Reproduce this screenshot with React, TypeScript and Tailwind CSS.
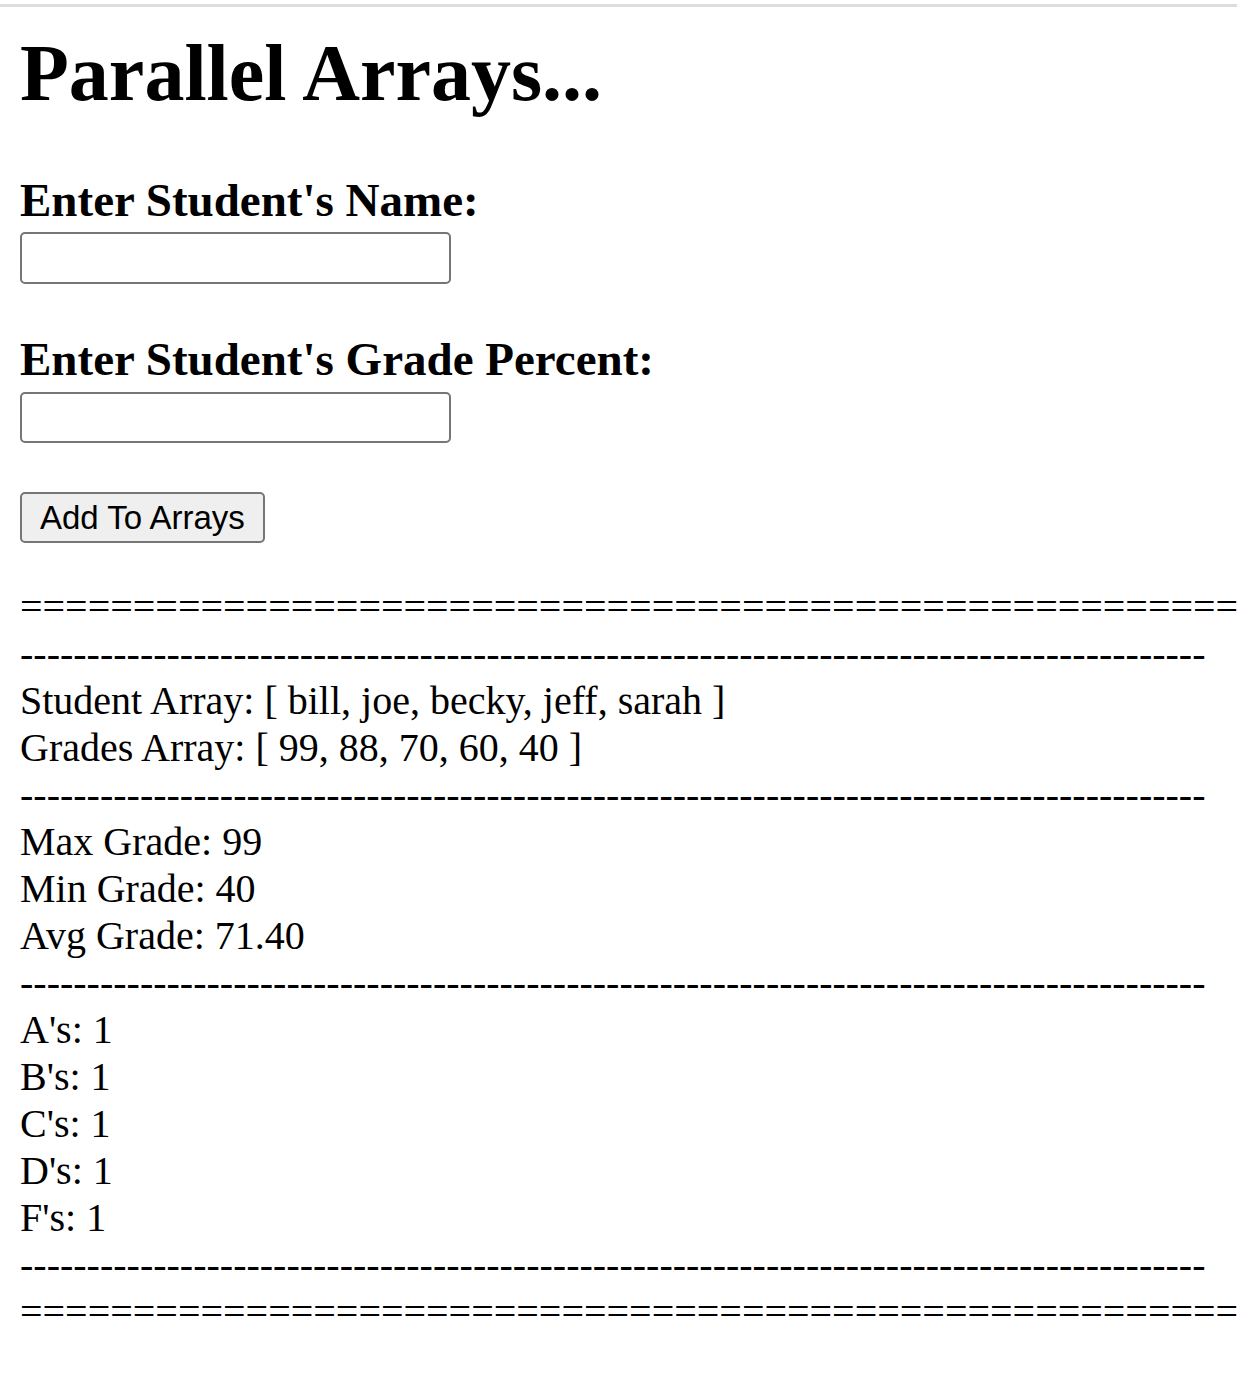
const serif = "font-['Liberation_Serif','Times_New_Roman',serif]";

const dashes = '-'.repeat(89);
const equals = '='.repeat(54);

const Line = ({ children }: { children: React.ReactNode }) => (
  <div className="h-[47px] overflow-hidden text-[40px] leading-[47px] whitespace-nowrap">{children}</div>
);

const App = () => {
  const students = ['bill', 'joe', 'becky', 'jeff', 'sarah'];
  const grades = [99, 88, 70, 60, 40];

  return (
    <div className={`min-h-screen overflow-hidden bg-white text-black ${serif}`}>
      <div className="pt-[4px]">
        <div className="h-[3px] bg-[#dddddd]" />
      </div>
      <div className="pl-[20px]">
        <h1 className="mt-[20px] h-[92px] text-[80px] font-bold leading-[92px]">Parallel Arrays...</h1>

        <h3 className="mt-[54px] h-[54px] text-[47px] font-bold leading-[54px]">Enter Student's Name:</h3>
        <input
          type="text"
          className="mt-[5px] block h-[52px] w-[431px] rounded-[5px] border-2 border-[#767676] bg-white px-2 text-[33px]"
        />

        <h3 className="mt-[48px] h-[54px] text-[47px] font-bold leading-[54px]">Enter Student's Grade Percent:</h3>
        <input
          type="text"
          className="mt-[6px] block h-[51px] w-[431px] rounded-[5px] border-2 border-[#767676] bg-white px-2 text-[33px]"
        />

        <button
          type="button"
          className="mt-[49px] flex h-[51px] items-center rounded-[5px] border-2 border-[#767676] bg-[#efefef] px-[18px] font-['Liberation_Sans',Arial,sans-serif] text-[33px] leading-none"
        >
          Add To Arrays
        </button>

        <div className="mt-[40px]">
          <Line>{equals}</Line>
          <Line>{dashes}</Line>
          <Line>Student Array: [ {students.join(', ')} ]</Line>
          <Line>Grades Array: [ {grades.join(', ')} ]</Line>
          <Line>{dashes}</Line>
          <Line>Max Grade: 99</Line>
          <Line>Min Grade: 40</Line>
          <Line>Avg Grade: 71.40</Line>
          <Line>{dashes}</Line>
          <Line>A's: 1</Line>
          <Line>B's: 1</Line>
          <Line>C's: 1</Line>
          <Line>D's: 1</Line>
          <Line>F's: 1</Line>
          <Line>{dashes}</Line>
          <Line>{equals}</Line>
        </div>
      </div>
    </div>
  );
};

export default App;
